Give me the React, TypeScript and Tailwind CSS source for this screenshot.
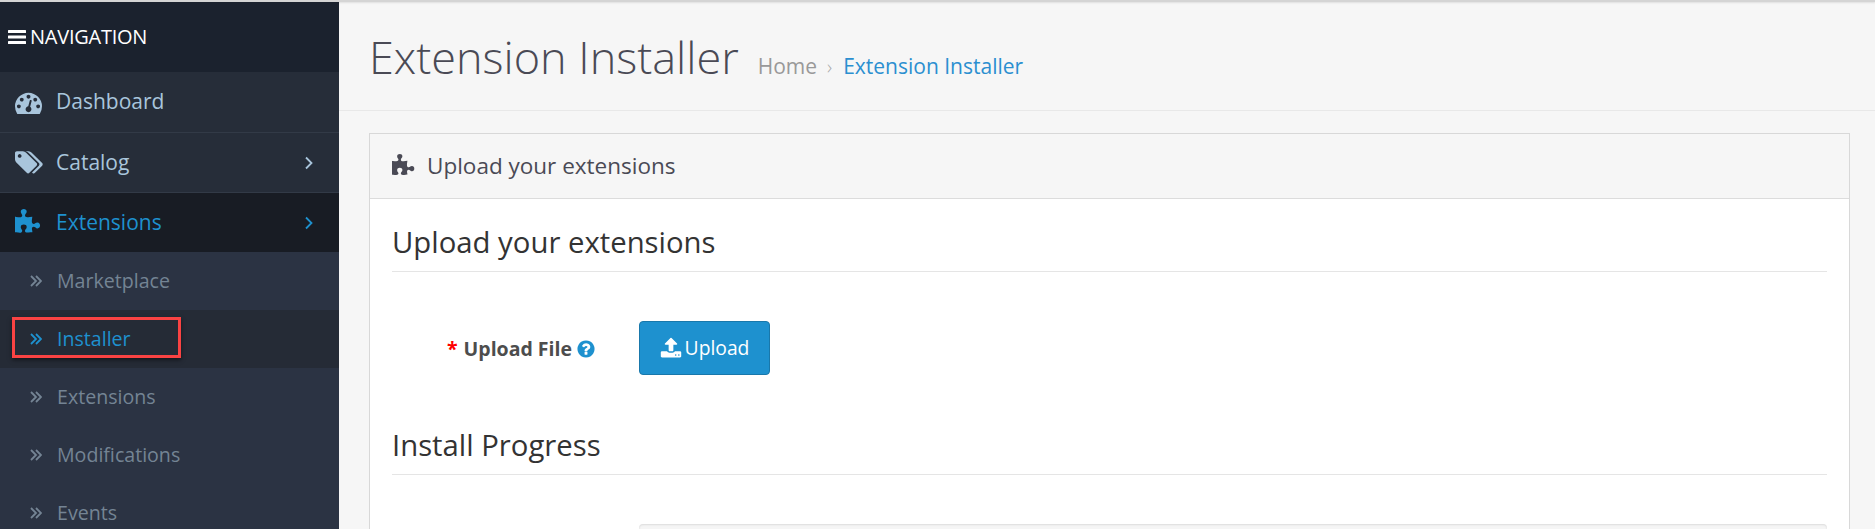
import React from 'react'

const PUZZLE = 'M1664 1098q0 81-44.5 135t-123.5 54q-41 0-77.5-17.5t-59-38-56.5-38-71-17.5q-110 0-110 124 0 39 16 115t15 115v5q-22 0-33 1-34 3-97.5 11.5t-115.5 13.5-98 5q-61 0-103-26.5t-42-83.5q0-37 17.5-71t38-56.5 38-59 17.5-77.5q0-79-54-123.5t-135-44.5q-84 0-143 45.5t-59 127.5q0 43 15 83t33.5 64.5 33.5 53 15 50.5q0 45-46 89-37 35-117 35-95 0-245-24-9-2-27.5-4t-27.5-4l-13-2q-1 0-3-1-2 0-2-1v-1024q2 1 17.5 3.5t34 5 21.5 3.5q150 24 245 24 80 0 117-35 46-44 46-89 0-22-15-50.5t-33.5-53-33.5-64.5-15-83q0-82 59-127.5t144-45.5q80 0 134 44.5t54 123.5q0 41-17.5 77.5t-38 59-38 56.5-17.5 71q0 57 42 83.5t103 26.5q64 0 180-15t163-17v2q-1 2-3.5 17.5t-5 34-3.5 21.5q-24 150-24 245 0 80 35 117 44 46 89 46 22 0 50.5-15t53-33.5 64.5-33.5 83-15q82 0 127.5 59t45.5 143z'
const DASH = 'M384 1152q0-53-37.5-90.5t-90.5-37.5-90.5 37.5-37.5 90.5 37.5 90.5 90.5 37.5 90.5-37.5 37.5-90.5zm192-448q0-53-37.5-90.5t-90.5-37.5-90.5 37.5-37.5 90.5 37.5 90.5 90.5 37.5 90.5-37.5 37.5-90.5zm428 481l101-382q6-26-7.5-48.5t-38.5-29.5-48 6.5-30 39.5l-101 382q-60 5-107 43.5t-63 98.5q-20 77 20 146t117 89 146-20 89-117q16-60-6-117t-72-91zm660-33q0-53-37.5-90.5t-90.5-37.5-90.5 37.5-37.5 90.5 37.5 90.5 90.5 37.5 90.5-37.5 37.5-90.5zm-640-640q0-53-37.5-90.5t-90.5-37.5-90.5 37.5-37.5 90.5 37.5 90.5 90.5 37.5 90.5-37.5 37.5-90.5zm448 192q0-53-37.5-90.5t-90.5-37.5-90.5 37.5-37.5 90.5 37.5 90.5 90.5 37.5 90.5-37.5 37.5-90.5zm320 448q0 261-141 483-19 29-54 29h-1402q-35 0-54-29-141-221-141-483 0-182 71-348t191-286 286-191 348-71 348 71 286 191 191 286 71 348z'
const TAGS = 'M448 448q0-53-37.5-90.5t-90.5-37.5-90.5 37.5-37.5 90.5 37.5 90.5 90.5 37.5 90.5-37.5 37.5-90.5zm1067 576q0 53-37 90l-491 492q-39 37-91 37-53 0-90-37l-715-716q-38-37-64.5-101t-26.5-117v-416q0-52 38-90t90-38h416q53 0 117 26.5t102 64.5l715 714q37 39 37 91zm384 0q0 53-37 90l-491 492q-39 37-91 37-36 0-59-14t-53-45l470-470q37-37 37-90 0-52-37-91l-715-714q-38-38-102-64.5t-117-26.5h224q53 0 117 26.5t102 64.5l715 714q37 39 37 91z'
const UPLOAD = 'M1344 1472q0-26-19-45t-45-19-45 19-19 45 19 45 45 19 45-19 19-45zm256 0q0-26-19-45t-45-19-45 19-19 45 19 45 45 19 45-19 19-45zm128-224v320q0 40-28 68t-68 28h-1472q-40 0-68-28t-28-68v-320q0-40 28-68t68-28h427q21 56 70.5 92t110.5 36h256q61 0 110.5-36t70.5-92h427q40 0 68 28t28 68zm-325-648q-17 40-59 40h-256v448q0 26-19 45t-45 19h-256q-26 0-45-19t-19-45v-448h-256q-42 0-59-40-17-39 14-69l448-448q18-19 45-19t45 19l448 448q31 30 14 69z'
const QUESTION = 'M1024 1376v-192q0-14-9-23t-23-9h-192q-14 0-23 9t-9 23v192q0 14 9 23t23 9h192q14 0 23-9t9-23zm256-672q0-88-55.5-163t-138.5-116-170-41q-243 0-371 213-15 24 8 42l132 100q7 6 19 6 16 0 25-12 53-68 86-92 34-24 86-24 48 0 85.5 26t37.5 59q0 38-20 61t-68 45q-63 28-115.5 86.5t-52.5 125.5v36q0 14 9 23t23 9h192q14 0 23-9t9-23q0-19 21.5-49.5t54.5-49.5q32-18 49-28.5t46-35 44.5-48 28-60.5 12.5-81zm384 192q0 209-103 385.5t-279.5 279.5-385.5 103-385.5-103-279.5-279.5-103-385.5 103-385.5 279.5-279.5 385.5-103 385.5 103 279.5 279.5 103 385.5z'

const Fa = ({ d, className, box = '0 0 1792 1792' }: { d: string; className: string; box?: string }) => (
  <svg viewBox={box} className={className} fill="currentColor">
    <path d={d} />
  </svg>
)

const Chevron = () => (
  <svg viewBox="0 0 8 14" className="w-[8px] h-[14px]" fill="none" stroke="currentColor" strokeWidth="1.8">
    <path d="M1 1.5 6.5 7 1 12.5" />
  </svg>
)

const DoubleChevron = () => (
  <svg viewBox="0 0 12 12" className="w-[12px] h-[12px] shrink-0" fill="none" stroke="currentColor" strokeWidth="1.8">
    <path d="M1 1 6 6 1 11M6 1 11 6 6 11" />
  </svg>
)

const subLinks = [
  { label: 'Marketplace', active: false },
  { label: 'Installer', active: true },
  { label: 'Extensions', active: false },
  { label: 'Modifications', active: false },
  { label: 'Events', active: false },
]

const Sidebar = () => (
  <aside className="w-[339px] shrink-0 bg-[#2b3343] text-[21px]">
    <div className="h-[70px] bg-[#1b222e] flex items-center pl-[8px] gap-[4px] text-white text-[20px] tracking-[-0.25px]">
      <svg viewBox="0 0 18 14" className="w-[18px] h-[14px]" fill="currentColor">
        <rect width="18" height="3" rx="0.5" />
        <rect y="5.5" width="18" height="3" rx="0.5" />
        <rect y="11" width="18" height="3" rx="0.5" />
      </svg>
      NAVIGATION
    </div>
    <div className="h-[61px] bg-[#262d39] border-b border-[#323a47] flex items-center pl-[15px] text-[#a9c5dc]">
      <Fa d={DASH} className="w-[27px] h-[27px] mr-[14px]" />
      Dashboard
    </div>
    <div className="h-[60px] bg-[#262d39] border-b border-[#323a47] flex items-center pl-[15px] pr-[26px] text-[#a9c5dc]">
      <Fa d={TAGS} box="0 0 1920 1792" className="w-[28px] h-[27px] mr-[13px]" />
      <span className="flex-1">Catalog</span>
      <Chevron />
    </div>
    <div className="h-[59px] bg-[#181c24] flex items-center pl-[15px] pr-[26px] text-[#1e91cf]">
      <Fa d={PUZZLE} className="w-[27px] h-[27px] mr-[14px]" />
      <span className="flex-1">Extensions</span>
      <Chevron />
    </div>
    <ul className="text-[19.6px] text-[#748494]">
      {subLinks.map((link) => (
        <li
          key={link.label}
          className={`h-[58px] flex items-center pl-[30px] gap-[15px] ${link.active ? 'bg-[#252b36] text-[#1e91cf]' : ''}`}
        >
          <DoubleChevron />
          {link.active ? (
            <span className="relative">
              {link.label}
              <span className="absolute left-[-45px] top-[-7px] w-[169px] h-[41px] border-[3px] border-[#fa4343] shadow-[0_2px_4px_rgba(0,0,0,0.5)]" />
            </span>
          ) : (
            link.label
          )}
        </li>
      ))}
    </ul>
  </aside>
)

const App = () => {
  return (
    <div className="h-[529px] overflow-hidden bg-[#f6f6f6] font-['Open_Sans',sans-serif] flex flex-col">
      <div className="h-[2px] bg-[#d4d4d4] shrink-0 shadow-[0_1px_2px_rgba(0,0,0,0.1)]" />
      <div className="flex flex-1 min-h-0">
        <Sidebar />
        <main className="flex-1 min-w-0">
          <header className="h-[109px] border-b border-[#e8e8e8] flex items-center pl-[30px]">
            <h1 className="text-[45px] font-light text-[#4a4a55] leading-none">Extension Installer</h1>
            <div className="ml-[19px] mt-[22px] text-[21px] flex items-center text-[#999]">
              Home
              <span className="ml-[10px] mr-[11px] text-[20px] font-light text-[#aaa]">›</span>
              <span className="text-[#2b8fd0]">Extension Installer</span>
            </div>
          </header>
          <section className="ml-[30px] mr-[25px] mt-[22px] border border-[#d8d8d8] bg-white h-[500px]">
            <div className="h-[65px] bg-[#f6f6f6] border-b border-[#dcdcdc] flex items-center pl-[22px] text-[22.5px] text-[#4a4a55] gap-[11px]">
              <Fa d={PUZZLE} className="w-[24px] h-[24px]" />
              Upload your extensions
            </div>
            <div className="pl-[22px] pr-[22px]">
              <h2 className="h-[73px] pt-[23px] border-b border-[#e5e5e5] text-[29.3px] leading-[40px] text-[#333]">Upload your extensions</h2>
              <div className="flex items-center mt-[49px] h-[55px]">
                <label className="w-[247px] flex items-center justify-end pr-[43px] text-[19.5px] font-bold text-[#4d4d4d]">
                  <span className="text-[#f00] mr-[6px]">*</span>
                  Upload File
                  <Fa d={QUESTION} className="w-[20px] h-[20px] ml-[4px] text-[#1e91cf]" />
                </label>
                <button className="w-[131px] h-[54px] self-start rounded-[4px] bg-[#1e91cf] border border-[#1978ab] text-white text-[19.3px] flex items-center justify-center gap-[3px]">
                  <Fa d={UPLOAD} className="w-[22px] h-[22px]" />
                  Upload
                </button>
              </div>
              <h2 className="h-[99px] pt-[49px] border-b border-[#e5e5e5] text-[29.3px] leading-[40px] text-[#333]">Install Progress</h2>
              <div className="ml-[247px] mt-[49px] h-[40px] rounded-[4px] bg-[#f5f5f5] shadow-[inset_0_1px_2px_rgba(0,0,0,0.1)]" />
            </div>
          </section>
        </main>
      </div>
    </div>
  )
}

export default App
